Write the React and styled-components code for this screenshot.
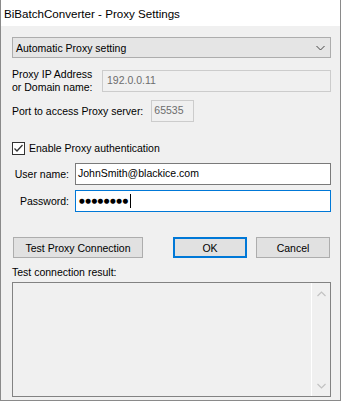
import React from "react";
import styled, { createGlobalStyle } from "styled-components";

const Global = createGlobalStyle`
  html, body { margin: 0; padding: 0; background: #f0f0f0; }
  * { box-sizing: border-box; }
`;

const Win = styled.div`
  width: 341px;
  height: 401px;
  display: flex;
  flex-direction: column;
  background: #f0f0f0;
  border: 1px solid #8a8a8a;
  border-top: none;
  font-family: "Liberation Sans", Arial, sans-serif;
  font-size: 10.5px;
  color: #000;
`;

const TitleBar = styled.div`
  height: 26px;
  flex: none;
  background: #fff;
  display: flex;
  align-items: center;
  padding-left: 3px;
  font-size: 11.6px;
  color: #000;
`;

const Body = styled.div`
  flex: 1;
  display: flex;
  flex-direction: column;
  padding: 11px 9px 0 11px;
`;

const Combo = styled.div`
  height: 21px;
  flex: none;
  display: flex;
  align-items: center;
  justify-content: space-between;
  background: #e5e5e5;
  border: 1px solid #adadad;
  padding: 0 5px 0 3px;
`;

const Row = styled.div`
  display: flex;
  align-items: center;
  margin-top: ${(p) => p.$mt}px;
`;

const Label = styled.div`
  line-height: 13px;
  flex: none;
  width: ${(p) => (p.$w ? `${p.$w}px` : "auto")};
  text-align: ${(p) => (p.$right ? "right" : "left")};
  margin-right: ${(p) => p.$mr || 0}px;
`;

const Field = styled.div`
  height: 22px;
  flex: ${(p) => (p.$w ? "none" : "1")};
  width: ${(p) => (p.$w ? `${p.$w}px` : "auto")};
  border: 1px solid ${(p) => p.$border};
  background: ${(p) => p.$bg};
  color: ${(p) => p.$color};
  padding: 3px 0 0 ${(p) => p.$pl}px;
  line-height: 13px;
  display: flex;
  align-items: flex-start;
  white-space: nowrap;
  overflow: hidden;
`;

const CheckBox = styled.div`
  width: 13px;
  height: 13px;
  flex: none;
  border: 1px solid #333;
  background: #fff;
  display: flex;
  align-items: center;
  justify-content: center;
  margin-right: 4px;
`;

const Dots = styled.span`
  font-family: "DejaVu Sans", sans-serif;
  font-size: 6.6px;
  letter-spacing: 0.45px;
  line-height: 14px;
`;

const Caret = styled.span`
  display: inline-block;
  width: 1px;
  height: 14px;
  background: #000;
  margin-left: 1px;
`;

const ButtonRow = styled.div`
  display: flex;
  margin-top: 25px;
  padding-left: 1px;
`;

const Button = styled.div`
  height: 21px;
  width: ${(p) => p.$w}px;
  margin-left: ${(p) => p.$ml || 0}px;
  background: #e1e1e1;
  border: ${(p) => (p.$default ? "2px solid #0078d7" : "1px solid #adadad")};
  display: flex;
  align-items: center;
  justify-content: center;
`;

const ResultBox = styled.div`
  margin-top: 3px;
  height: 115px;
  border: 1px solid #828282;
  background: #f0f0f0;
  display: flex;
  justify-content: flex-end;
`;

const ScrollBar = styled.div`
  width: 19px;
  border-left: 1px solid #fff;
  display: flex;
  flex-direction: column;
  justify-content: space-between;
  align-items: center;
  padding: 8px 0 7px;
`;

const Chevron = ({ down, color = "#c2c2c2" }) => (
  <svg width="9" height="6" viewBox="0 0 9 6">
    <path
      d={down ? "M0.5 1 L4.5 5 L8.5 1" : "M0.5 5 L4.5 1 L8.5 5"}
      fill="none"
      stroke={color}
      strokeWidth="1.2"
    />
  </svg>
);

export default function App() {
  return (
    <>
      <Global />
      <Win>
        <TitleBar>BiBatchConverter - Proxy Settings</TitleBar>
        <Body>
          <Combo>
            <span>Automatic Proxy setting</span>
            <svg width="9" height="6" viewBox="0 0 9 6">
              <path d="M0.5 1 L4.5 5 L8.5 1" fill="none" stroke="#444" strokeWidth="1" />
            </svg>
          </Combo>
          <Row $mt={10}>
            <Label $w={90}>
              Proxy IP Address
              <br />
              or Domain name:
            </Label>
            <Field $border="#cccccc" $bg="#f0f0f0" $color="#6d6d6d" $pl={4}>
              192.0.0.11
            </Field>
          </Row>
          <Row $mt={6}>
            <Label $mr={8}>Port to access Proxy server:</Label>
            <Field $w={43} $border="#cccccc" $bg="#f0f0f0" $color="#6d6d6d" $pl={2}>
              65535
            </Field>
          </Row>
          <Row $mt={20}>
            <CheckBox>
              <svg width="11" height="11" viewBox="0 0 11 11">
                <path d="M1.5 5.5 L4 8 L9.5 2" fill="none" stroke="#333" strokeWidth="1.3" />
              </svg>
            </CheckBox>
            <Label>Enable Proxy authentication</Label>
          </Row>
          <Row $mt={8}>
            <Label $w={57} $right $mr={6}>
              User name:
            </Label>
            <Field $border="#7a7a7a" $bg="#fff" $color="#000" $pl={2}>
              JohnSmith@blackice.com
            </Field>
          </Row>
          <Row $mt={5}>
            <Label $w={57} $right $mr={6}>
              Password:
            </Label>
            <Field $border="#0078d7" $bg="#fff" $color="#000" $pl={3}>
              <Dots>●●●●●●●●</Dots>
              <Caret />
            </Field>
          </Row>
          <ButtonRow>
            <Button $w={130}>Test Proxy Connection</Button>
            <Button $w={74} $ml={30} $default>
              OK
            </Button>
            <Button $w={74} $ml={9}>
              Cancel
            </Button>
          </ButtonRow>
          <Row $mt={8}>
            <Label>Test connection result:</Label>
          </Row>
          <ResultBox>
            <ScrollBar>
              <Chevron />
              <Chevron down />
            </ScrollBar>
          </ResultBox>
        </Body>
      </Win>
    </>
  );
}
